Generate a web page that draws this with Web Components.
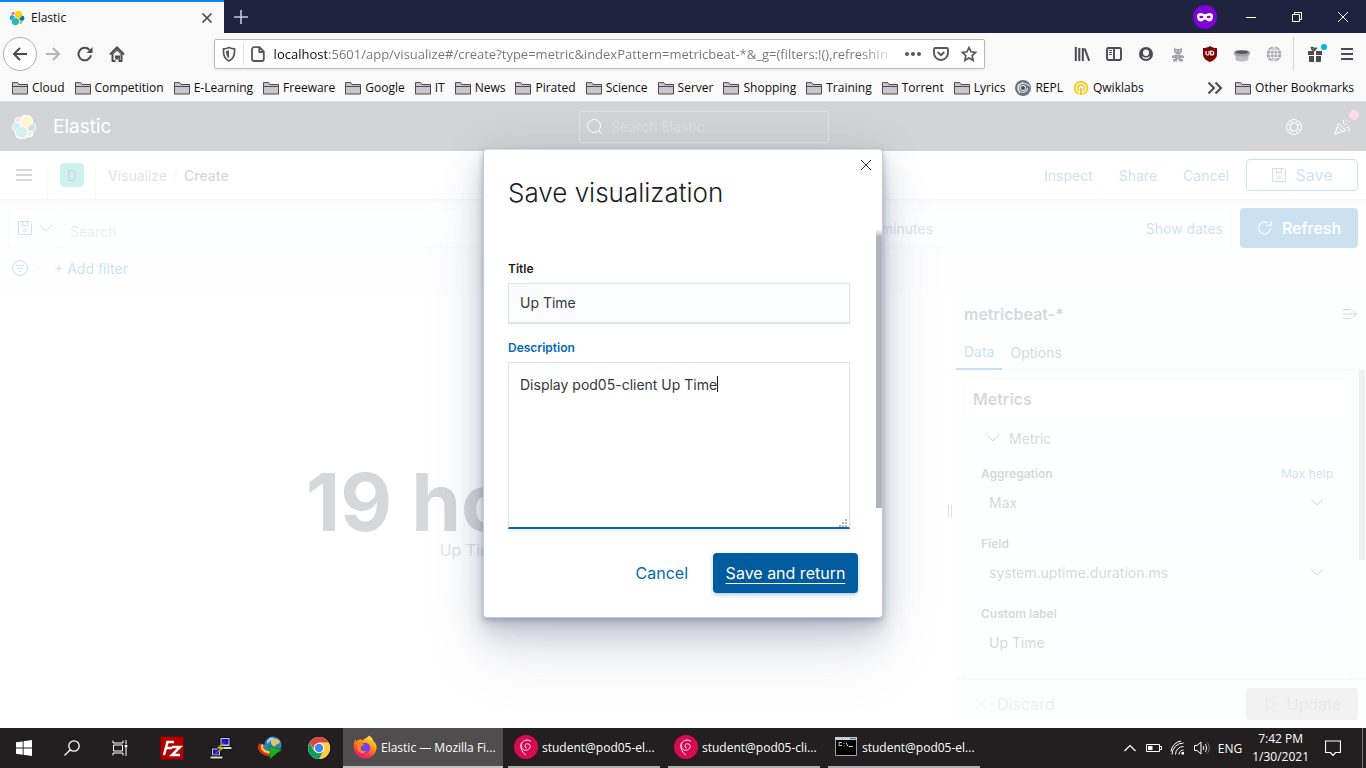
<!DOCTYPE html>
<html lang="en">
<head>
<meta charset="utf-8">
<title>Elastic</title>
<style>
html,body{margin:0;height:100%}
body{display:flex;flex-direction:column;overflow:hidden;font-family:Inter,"Liberation Sans",sans-serif;font-size:14px;color:#343741}
</style>
</head>
<body>
<browser-tabs></browser-tabs>
<browser-toolbar></browser-toolbar>
<bookmarks-bar></bookmarks-bar>
<kibana-app></kibana-app>
<task-bar></task-bar>

<script>
const RESET = `*,:host{box-sizing:border-box}
button,input,select,textarea{font:inherit;color:inherit;margin:0;padding:0;border:0;background:none;border-radius:0;outline:0;appearance:none}
a{color:inherit;text-decoration:none}h1,h2,h3,p{margin:0;font:inherit}`;
function define(name, css, html, setup){
  const t = document.createElement('template');
  t.innerHTML = `<style>${RESET}${css}</style>${html}`;
  customElements.define(name, class extends HTMLElement{
    constructor(){super();this.attachShadow({mode:'open'})}
    connectedCallback(){
      this.shadowRoot.replaceChildren(t.content.cloneNode(true));
      if(setup) setup(this,this.shadowRoot);
    }
  });
}

const S = (d,w=1)=>`<path d="${d}" fill="none" stroke="currentColor" stroke-width="${w}"/>`;
const F = d=>`<path d="${d}" fill="currentColor"/>`;
const ICONS = {
  elastic:[32,`<path fill="#fff" d="M32 16.77a6.33 6.33 0 00-4.14-5.95 9.1 9.1 0 00-16.5-6.9 4.86 4.86 0 00-7.26 6.06A6.3 6.3 0 000 15.9a6.3 6.3 0 004.16 5.97 9.07 9.07 0 0016.4 6.88 4.84 4.84 0 007.26-6.05A6.35 6.35 0 0032 16.77"/><path fill="#fed10a" d="M12.58 13.79l7 3.21 7.07-6.21a7.85 7.85 0 00.15-1.56c0-4.29-3.46-7.75-7.72-7.75a7.77 7.77 0 00-6.4 3.4l-1.16 6.08z"/><path fill="#24bbb1" d="M5.33 21.21a7.9 7.9 0 00-.15 1.59c0 4.3 3.47 7.78 7.75 7.78a7.78 7.78 0 006.4-3.4l1.16-6.06-1.55-2.98-7.02-3.22z"/><path fill="#ef5098" d="M5.29 9.07l4.8 1.13L11.14 4.7a3.82 3.82 0 00-5.85 4.37z"/><path fill="#17a8e0" d="M4.87 10.21a5.7 5.7 0 00-3.74 5.35 5.68 5.68 0 003.65 5.3l6.73-6.12-1.24-2.66z"/><path fill="#93c83e" d="M20.87 27.18a3.82 3.82 0 005.84-4.36l-4.79-1.12z"/><path fill="#0779a1" d="M21.84 20.57l5.28 1.24a5.7 5.7 0 003.74-5.35 5.68 5.68 0 00-3.65-5.29l-6.91 6.07z"/>`],
  tabclose:[16,S('M3.5 3.5l9 9M12.5 3.5l-9 9',1.7)],
  newtab:[16,S('M8 1v14M1 8h14',1.6)],
  mask:[24,`<circle cx="12" cy="12" r="12" fill="#8000d7"/><path fill="#fff" d="M4 11.5c0-2.6 1.6-3.4 3.4-3.4 2 0 3 1.1 4.6 1.1s2.6-1.1 4.6-1.1c1.8 0 3.4.8 3.4 3.4 0 3.2-1.6 4.9-3.7 4.9-2.3 0-3-2-4.300-2s-2 2-4.300 2C5.600 16.400 4 14.700 4 11.500z"/><ellipse cx="8.300" cy="12" rx="2" ry="1.200" fill="#8000d7"/><ellipse cx="15.700" cy="12" rx="2" ry="1.200" fill="#8000d7"/>`],
  minimize:[10,S('M0 5.500h10')],
  restore:[10,S('M.5 2.500h7v7h-7zM2.500 2.500v-2h7v7h-2')],
  winclose:[10,S('M0 0l10 10M10 0L0 10')],
  back:[16,S('M15 8H2M8 2L2 8l6 6',2)],
  forward:[16,S('M1 8h13M8 2l6 6-6 6',2)],
  reload:[16,S('M14 9.300A6.300 6.300 0 1 1 12.500 3.800',2)+F('M15.500 1v6h-6z')],
  home:[16,S('M1 8.500l7-7 7 7',2)+F('M2.500 8.500L8 3l5.500 5.500V15a1 1 0 01-1 1H9.500v-4h-3v4H3.500a1 1 0 01-1-1z')+'<path fill="#f9f9fa" d="M4.500 8L8 4.700 11.500 8v6H11V9.500H6V14H4.500z"/>'+F('M7 10.500h2v3H7z')],
  shield:[16,S('M8 1.500c2 1 4 1.300 5.500 1.300v3C13.500 10 12 13 8 15 4 13 2.500 10 2.500 5.800v-3C4 2.800 6 2.500 8 1.500z',1.700)+F('M8 4c-1 .6-2 .8-3 .9C5 9 6 11 8 12.300z')],
  page:[16,S('M4 1.200h5.500l4.300 4.300V13a2 2 0 01-2 2H4a2 2 0 01-2-2V3.200a2 2 0 012-2zM9.300 1.500V6h4.500',1.800)],
  dots:[16,'<g fill="currentColor"><circle cx="2" cy="8" r="2"/><circle cx="8" cy="8" r="2"/><circle cx="14" cy="8" r="2"/></g>'],
  pocket:[16,S('M2.500 2h11a1.500 1.500 0 011.500 1.500V7A7 7 0 011 7V3.500A1.500 1.500 0 012.500 2zM4.700 6L8 9.200 11.300 6',1.900)],
  star:[16,S('M8 1.500l2 4.300 4.700.6-3.500 3.200.9 4.700L8 12l-4.100 2.300.9-4.700L1.300 6.400 6 5.800z',1.700)],
  library:[16,S('M1.800 1v14M5.300 2v13M8.800 2v13M10.600 2.500l4.600 12.300',2)],
  sidebar:[16,S('M2.500 2h11A1.500 1.500 0 0115 3.500v9a1.500 1.500 0 01-1.500 1.500h-11A1.500 1.500 0 011 12.500v-9A1.500 1.500 0 012.500 2zM8 2v12',1.900)+S('M3 4.500h3M3 6.500h3M3 8.500h3')],
  account:[16,'<path fill-rule="evenodd" fill="currentColor" d="M8 1a7 7 0 110 14A7 7 0 018 1zM8 3.500A3 3 0 005 6.500 3 3 0 008 10a3 3 0 003-3.500 3 3 0 00-3-3zM3.800 9.800A4.800 4.800 0 008 13.200a4.800 4.800 0 004.200-3.400C11 11 10 11.600 8 11.600S5 11 3.800 9.800z"/>'],
  ghost:[16,'<g fill="#a3a3a5"><path d="M4 1.500L6 3h4l2-1.500V6l-2 2H6L4 6z"/><path d="M2 10l4-1.500L8 10l2-1.500 4 1.500v2H2zM3 13h4v2.500H3zM9 13h4v2.500H9zM5 8.500h6V14H5z"/></g><path fill="#f9f9fa" d="M5.500 4.500h1.500v1H5.500zM9 4.500h1.500v1H9zM7.500 11h1v1h-1zM7.500 13h1v1h-1z"/>'],
  ublock:[16,'<path fill="#800000" d="M8 0c2 1.400 4.500 2 7 2v6c0 4.500-3.500 6.500-7 8-3.500-1.500-7-3.500-7-8V2c2.500 0 5-.6 7-2z"/><path d="M4 5v2.500a1.500 1.500 0 003 0V5M8.700 5v4h1a2 2 0 000-4z" fill="none" stroke="#fff" stroke-width="1.200"/>'],
  jar:[16,'<path fill="#bdbdbf" d="M1.500 8h13v5c0 1.500-3 2.500-6.500 2.500s-6.500-1-6.500-2.500z"/><path fill="#a3a3a5" d="M0 6.500C0 4.600 3.600 4 8 4s8 .6 8 2.500V8c0 1.500-3.600 2.300-8 2.300S0 9.500 0 8z"/><ellipse cx="8" cy="6.300" rx="6.500" ry="1.700" fill="#58585a"/>'],
  globe:[16,'<circle cx="8" cy="8" r="7.500" fill="#a9a9ab"/><path d="M8 0v16M0 8h16M1.500 4.300h13M1.500 11.700h13M8 .5C3 4 3 12 8 15.500M8 .5c5 3.500 5 11.500 0 15" fill="none" stroke="#f9f9fa" stroke-width=".9"/>'],
  gift:[16,F('M1 5h6v4H1zM9 5h6v4H9zM2 10h5v6H3a1 1 0 01-1-1zM9 10h5v5a1 1 0 01-1 1H9z')+S('M8 4.500C5 4.500 4.500 3 4.500 1.500 6.500 1.500 8 2.500 8 4.500c0-2 1-2.500 2-2.500',1.600)],
  burger:[16,S('M2 3h12M2 8h12M2 13h12',2)],
  folder:[16,'<path d="M.5 14V2.600h5.200l1.200 1.900h8.600V14z" fill="#c9c7cb" stroke="#4a4a4f"/><path d="M1 6.500h14" stroke="#4a4a4f" fill="none"/>'],
  repl:[16,'<circle cx="8" cy="8" r="8" fill="#66777f"/><g fill="none" stroke="#dfe6e9" stroke-width="1.100"><path d="M12.500 8A4.500 4.500 0 118 3.500c3 0 5.500 1 7 3"/><path d="M3.500 8c0-3 2-5 5-5.500M4 4C2 6.500 2.500 11 5 13"/></g><circle cx="8" cy="8" r="3" fill="#eef1f2"/><circle cx="8" cy="8" r="2.100" fill="#3f4d54"/>'],
  qwik:[16,'<g fill="none" stroke="#f7ca18"><path d="M6 14A6.300 6.300 0 1110 14" stroke-width="1.800"/><path d="M6 10.800a3.400 3.400 0 114 0" stroke-width="1.500"/><path d="M8 8v7" stroke-width="2.200"/></g>'],
  more:[16,S('M1.500 2.500L7 8l-5.500 5.500M8.500 2.500L14 8l-5.500 5.500',2)],
  lens:[16,S('M7 .5a6.500 6.500 0 110 13 6.500 6.500 0 010-13zM11.500 11.500L15.700 15.700')],
  help:[16,S('M8 .5a7.500 7.500 0 110 15 7.500 7.500 0 010-15zM8 4a4 4 0 110 8 4 4 0 010-8zM4.500 1.500L6.300 4.500M11.500 1.500L9.700 4.500M4.500 14.500l1.800-3M11.500 14.500l-1.800-3M1.500 4.500l3 1.800M1.500 11.500l3-1.800M14.500 4.500l-3 1.800M14.500 11.500l-3-1.800')],
  cheer:[16,S('M4.500 4.500L.7 15.300l10.800-3.800zM3.500 7.500l5 5M2.300 11l2.700 2.700M9 5c1-1 1-2.500.3-4M10.500 6.500L13 4M12 9c1.500-1 3-.7 3.500.8s-1 2-1 3M12 1.200h1M14.500 2.500h1M14 6.500h1')],
  menu:[16,S('M0 3h16M0 8h16M0 13h16',2)],
  save:[16,S('M1.500 1.500h11l2 2v11h-13zM5.500 1.500v4h5v-4M8 9a1.500 1.500 0 110 3 1.500 1.500 0 010-3z')],
  down:[16,S('M2 5l6 6 6-6')],
  filter:[16,S('M8 .5a7.500 7.500 0 110 15 7.500 7.500 0 010-15zM3.500 5.500h9M5 8.500h6M7 11.500h2')],
  refresh:[16,S('M13.500 8.500A6 6 0 1110.500 2.700M14 1v4.500H9.500',1.100)],
  collapse:[16,S('M1 3.500h8M1 8h13.500M1 12.500h8M11 4.500L14.500 8 11 11.500')],
  cross:[16,S('M3 3l10 10M13 3L3 13')],
  play:[16,S('M3.500 2.200v11.600L12.500 8z')],
  start:[16,F('M0 2.300L6.700 1.400v6.200H0zM7.600 1.300L16 0v7.600H7.600zM0 8.500h6.700v6.200L0 13.800zM7.600 8.500H16V16L7.600 14.800z')],
  search:[16,S('M10 .8a5.200 5.200 0 110 10.400A5.200 5.200 0 0110 .8zM6.300 9.700L.5 15.500',1.300)],
  taskview:[16,S('M1 .5v2.500h10V.5M1 15.500V13h10v2.500M1.500 5h9v6h-9zM14 0v4.500M14 8v8')+F('M12.700 5h2.600v2.500h-2.600z')],
  filezilla:[24,'<path fill="#b30000" stroke="#7a0000" stroke-dasharray="1 1" d="M.5.5h23v23H.5z"/><path d="M4 19L7.500 6H14M6 12h6M12 11h8l-8 8h8" fill="none" stroke="#fff" stroke-width="2.500"/>'],
  putty:[24,'<g stroke="#111"><path fill="#c9c9c9" d="M11 1.500h10v9H11zM2.500 12h9v8h-9z"/><path fill="#ddd" d="M9 10.500h14v3H9zM1 20h13v3H1z"/></g><path fill="#1818d8" d="M12.500 3h7v5.500h-7zM4 13.500h6v5H4z"/><path fill="#ffee20" stroke="#6d6500" stroke-width=".5" d="M16 6l-8 6 4 .5L6 18l9-6-4-.5z"/>'],
  idm:[24,'<circle cx="15" cy="9" r="8.500" fill="#2f7ec0"/><path fill="#d8c86a" d="M15 3c4-1 7 1 7 3s-4 2-5 4-3-1-4-3 0-3 2-4z"/><path fill="#a6d8f5" d="M9 5c2-4 6-4 7-3s-4 2-7 6z"/><path d="M3 8c-4 5 1 11 10 11" stroke="#d93025" stroke-width="3" fill="none"/><path d="M5 8.500c-3 4 2 8 8 8" stroke="#f7d21b" stroke-width="2.500" fill="none"/><path d="M7 9c-2 3 2 5 6 5" stroke="#3b78d8" stroke-width="2" fill="none"/><path fill="#16b31c" stroke="#0b6b10" stroke-width=".6" d="M11 10l13 4-5 3-7 6 0-6z"/>'],
  chrome:[24,'<circle cx="12" cy="12" r="11" fill="#fff"/><path fill="#ffcd40" d="M21.500 6.500A11 11 0 0112 23l-1-1 5.500-8L12 6.500z"/><path fill="#0f9d58" d="M2.500 6.500A11 11 0 0012 23l4.500-8.500L7 14.500z"/><path fill="#db4437" d="M12 6.500h9.500a11 11 0 00-19 0L7.500 14z"/><circle cx="12" cy="12" r="5.300" fill="#fff"/><circle cx="12" cy="12" r="4.200" fill="#4285f4"/>'],
  firefox:[24,'<defs><linearGradient id="g" x1=".8" y1="0" x2=".3" y2="1"><stop offset="0" stop-color="#fff44f"/><stop offset=".4" stop-color="#ff980e"/><stop offset=".75" stop-color="#ff3647"/><stop offset="1" stop-color="#e31587"/></linearGradient></defs><path fill="url(#g)" d="M16 .5c3 2 4 4 4.500 6C23 8 24 11 23.500 14A11.500 11.500 0 01.7 13C.4 9 1 6 3 4v3c1-1.500 2-2.500 4-2.500 1.500 0 2 .5 3 1C11 3 14 3.500 16 .5z"/><circle cx="12" cy="13" r="5.300" fill="#7542e5"/><path fill="#ff8a16" d="M4.500 8.500C7 7.500 9 8 11 9.500c-1 1.500-3.500 1.500-3.500 3.500 0 2.500 3 4 6 3-3 4-9 2-9.500-3z"/>'],
  debian:[24,'<circle cx="12" cy="12" r="12" fill="#d70a53"/><path d="M12.500 13c-1.500-.3-2-2-1-3.300s3.700-1.400 4.500.6c.9 2.500-1.500 5.200-4.500 5-3.500-.3-5.300-4-3.700-7.200C9.500 5 14 4 17 6.500M7.500 8c-1.700 4 0 9 4.500 12" fill="none" stroke="#fff" stroke-width="1"/>'],
  cmd:[24,'<path fill="#000" stroke="#98a2a8" d="M1.500 2.500h21v18h-21z"/><path fill="#c5d0d8" d="M1 2h22v3H1z"/><path fill="#3c6ea5" d="M16 3h6v1h-6z"/><path d="M8 7.500H5v3h3M10 8v1M10 10.500v1M12 7.500l2 4M15 11.500h4" fill="none" stroke="#ccc"/>'],
  up:[16,S('M2.500 11L8 5.500 13.500 11',1.200)],
  battery:[16,S('M.5 4.500h13v7H.5zM14 6.500h1.500v3H14')+F('M2 6h4.500v4H2z')],
  wifi:[16,S('M2 14.500A11.500 11.500 0 0113.500 3M5.500 14.500a8 8 0 018-8M9 14.500a4.500 4.500 0 014.500-4.500M1 11.500A12 12 0 0111 1')+F('M11.500 12h2.500v2.500h-2.500z')],
  sound:[16,S('M.5 5.500h2.500L7 2v12L3 10.500H.5zM9 6c1 1 1 3 0 4M11 4c2 2 2 6 0 8')+'<path d="M13 2.500c3 3 3 8 0 11" fill="none" stroke="#777"/>'],
  note:[16,S('M.5 1h15v11.500h-5L8 15.500 5.500 12.500h-5z',1.200)]
};
customElements.define('ui-icon', class extends HTMLElement{
  static observedAttributes = ['name','size'];
  constructor(){super();this.attachShadow({mode:'open'})}
  connectedCallback(){this.draw()}
  attributeChangedCallback(){this.draw()}
  draw(){
    const icon = ICONS[this.getAttribute('name')];
    if(!icon) return;
    const s = this.getAttribute('size')||16;
    this.shadowRoot.innerHTML = `<style>:host{display:inline-flex;flex:none}svg{display:block}</style><svg width="${s}" height="${s}" viewBox="0 0 ${icon[0]} ${icon[0]}" aria-hidden="true">${icon[1]}</svg>`;
  }
});

const OS = `font-family:"Open Sans","Noto Sans",sans-serif;`;

define('browser-tabs', `
:host{display:flex;flex:none;height:33px;background:#202340;${OS}font-size:12px;color:#fff}
.tab{width:224px;background:#f9f9fa;border-top:2px solid #0a84ff;color:#0c0c0d;display:flex;align-items:center;gap:6px;padding:0 9px}
.tab span{flex:1}
button{display:flex;align-items:center;justify-content:center}
.tab button{color:#4a4a4f}
.new{width:33px;color:#c9c9d4}
.win{margin-left:auto;display:flex}
.win>*{width:46px;display:flex;align-items:center;justify-content:center}`,
`<div class="tab"><ui-icon name="elastic"></ui-icon><span>Elastic</span><button aria-label="Close tab"><ui-icon name="tabclose"></ui-icon></button></div>
<button class="new" aria-label="New tab"><ui-icon name="newtab"></ui-icon></button>
<div class="win"><div><ui-icon name="mask" size="24"></ui-icon></div><button aria-label="Minimize"><ui-icon name="minimize" size="10"></ui-icon></button><button aria-label="Restore"><ui-icon name="restore" size="10"></ui-icon></button><button aria-label="Close"><ui-icon name="winclose" size="10"></ui-icon></button></div>`);

define('tool-button', `
:host{display:flex;flex:none;width:32px;height:32px}
button{width:100%;display:flex;align-items:center;justify-content:center}`,
`<button><ui-icon></ui-icon></button>`, (el,root)=>{
  root.querySelector('button').setAttribute('aria-label',el.getAttribute('label'));
  root.querySelector('ui-icon').setAttribute('name',el.getAttribute('icon'));
});

define('browser-toolbar', `
:host{display:flex;flex:none;align-items:center;height:41px;padding:0 3px;background:#f9f9fa;color:#4a4a4f;${OS}}
.back{width:34px;height:34px;border:1px solid #b1b1b3;border-radius:50%;background:#fff;align-items:center}
.off{color:#b5b5b7}
.gap{flex:82}
.url{flex:770;min-width:0;height:30px;display:flex;align-items:center;background:#fff;border:1px solid #b9b9bb;border-radius:2px;box-shadow:0 1px 3px #0001;padding:0 7px 0 6px;gap:8px;color:#57575b}
.url i{width:1px;height:22px;background:#dcdcde;margin:0 -2px}
input{flex:1;min-width:0;height:28px;font-size:13px;background:linear-gradient(90deg,#0c0c0d 53px,#737378 53px calc(100% - 36px),#73737800 calc(100% - 2px));-webkit-background-clip:text;background-clip:text;-webkit-text-fill-color:transparent}
.acts{display:flex;gap:12px;align-items:center}
.sep{width:1px;height:33px;background:#d7d7db;margin:0 5px 0 3px}
.gift{position:relative}
.gift b{position:absolute;right:4px;top:6px;width:6px;height:6px;border-radius:50%;background:#00b3f4}`,
`<tool-button class="back" icon="back" label="Back"></tool-button>
<tool-button class="off" icon="forward" label="Forward"></tool-button>
<tool-button icon="reload" label="Reload"></tool-button>
<tool-button icon="home" label="Home"></tool-button>
<div class="gap"></div>
<div class="url"><ui-icon name="shield"></ui-icon><i></i><ui-icon name="page"></ui-icon><input aria-label="Address" value="localhost:5601/app/visualize#/create?type=metric&amp;indexPattern=metricbeat-*&amp;_g=(filters:!(),refreshIn"><div class="acts"><ui-icon name="dots"></ui-icon><ui-icon name="pocket"></ui-icon><ui-icon name="star"></ui-icon></div></div>
<div class="gap"></div>
<tool-button icon="library" label="Library"></tool-button>
<tool-button icon="sidebar" label="Sidebars"></tool-button>
<tool-button icon="account" label="Account"></tool-button>
<tool-button icon="ghost" label="Add-on"></tool-button>
<tool-button icon="ublock" label="uBlock"></tool-button>
<tool-button icon="jar" label="Cookies"></tool-button>
<tool-button icon="globe" label="Proxy"></tool-button>
<div class="sep"></div>
<div class="gift"><tool-button icon="gift" label="What's new"></tool-button><b></b></div>
<tool-button icon="burger" label="Menu"></tool-button>`);

define('bookmark-item', `
:host{display:block;flex:none}
a{display:flex;align-items:center;gap:4px;white-space:nowrap;line-height:16px}`,
`<a href="#"><ui-icon></ui-icon><slot></slot></a>`, (el,root)=>{
  root.querySelector('ui-icon').setAttribute('name',el.getAttribute('icon')||'folder');
});
define('bookmarks-bar', `
:host{display:flex;flex:none;align-items:center;gap:12px;height:28px;padding:0 12px;background:#f9f9fa;border-bottom:1px solid #dcdcde;color:#0c0c0d;${OS}font-size:12px}
nav{display:flex;gap:10px;flex:1;min-width:0}
button{display:flex;color:#4a4a4f}`,
`<nav>${'Cloud,Competition,E-Learning,Freeware,Google,IT,News,Pirated,Science,Server,Shopping,Training,Torrent,Lyrics'.split(',').map(n=>`<bookmark-item>${n}</bookmark-item>`).join('')}<bookmark-item icon="repl">REPL</bookmark-item><bookmark-item icon="qwik">Qwiklabs</bookmark-item></nav>
<button aria-label="More bookmarks"><ui-icon name="more"></ui-icon></button><bookmark-item>Other Bookmarks</bookmark-item>`);

define('elastic-header', `
:host{display:flex;flex:none;align-items:center;justify-content:space-between;height:49px;background:#25282f;color:#fff}
.brand{display:flex;align-items:center;gap:17px;width:138px;padding-left:12px;font-size:19px}
.search{display:flex;align-items:center;gap:8px;width:250px;height:32px;padding:0 8px 0 7px;border:1px solid #6a6d75;border-radius:2px}
input{flex:1;min-width:0;font-size:14px}
input::placeholder{color:#5d6069;opacity:1}
.acts{display:flex}
button{width:48px;height:48px;display:flex;align-items:center;justify-content:center;position:relative}
b{position:absolute;right:7px;top:7px;width:10px;height:10px;border-radius:50%;background:#f04e98}`,
`<a class="brand" href="#"><ui-icon name="elastic" size="24"></ui-icon><span>Elastic</span></a>
<label class="search"><ui-icon name="lens"></ui-icon><input aria-label="Search Elastic" placeholder="Search Elastic"></label>
<div class="acts"><button aria-label="Help"><ui-icon name="help"></ui-icon></button><button aria-label="News"><ui-icon name="cheer"></ui-icon><b></b></button></div>`);

define('elastic-nav', `
:host{display:flex;flex:none;align-items:center;height:49px;border-bottom:1px solid #d3dae6;background:#fff;box-shadow:0 2px 2px #98a2b333;position:relative;padding-right:8px}
.m{width:47px;height:48px;display:flex;align-items:center;justify-content:center;color:#343741}
.av{align-self:stretch;display:flex;align-items:flex-end}
.av i{width:1px;height:32px;background:#d3dae6}
.av button{width:24px;height:24px;border-radius:4px;background:#00bfb3;margin:0 11px 12px 12px;font-size:14px;color:#222}
nav{display:flex;align-items:center;gap:8px;padding-left:12px}
nav a{color:#69707d}nav s{width:1px;height:16px;background:#c3cad6;transform:rotate(15deg)}
nav b{font-weight:500;color:#343741}
.acts{margin-left:auto;display:flex;align-items:center;gap:26px;color:#006bb4}
.save{width:112px;height:32px;border:1px solid #006bb4;border-radius:4px;font-size:16px;display:flex;gap:8px;align-items:center;justify-content:center;margin-left:-9px}`,
`<button class="m" aria-label="Menu"><ui-icon name="menu"></ui-icon></button>
<div class="av"><i></i><button>D</button><i></i></div>
<nav><a href="#">Visualize</a><s></s><b>Create</b></nav>
<div class="acts"><button>Inspect</button><button>Share</button><button>Cancel</button><button class="save"><ui-icon name="save"></ui-icon>Save</button></div>`);

define('query-bar', `
:host{display:block;flex:none;height:93px;padding:8px 8px 0;background:#f9fafc}
.row{display:flex;gap:8px}
.box{flex:1;display:flex;align-items:center;height:40px;border:1px solid #e2e7ef;background:#fbfcfd;box-shadow:0 1px 1px #98a2b322}
.sq{width:54px;align-self:stretch;display:flex;align-items:center;justify-content:center;gap:5px;color:#006bb4;border-right:1px solid #e2e7ef}
.box input{flex:1;min-width:0;padding:6px 7px 0;font-size:14px}
input::placeholder{color:#98a2b3;opacity:1}
.time{width:400px;display:flex;justify-content:space-between;padding-right:8px;color:#69707d}
.time button:last-child{color:#006bb4}
.go{width:118px;height:40px;border-radius:4px;background:#006bb4;color:#fff;font-size:16px;font-weight:500;display:flex;align-items:center;justify-content:center;gap:9px}
.filters{display:flex;align-items:center;gap:6px;height:40px;padding-left:4px;color:#006bb4}
.filters i{width:10px;height:1px;background:#d3dae6;margin-right:4px}`,
`<div class="row"><div class="box"><button class="sq" aria-label="Saved queries"><ui-icon name="save"></ui-icon><ui-icon name="down"></ui-icon></button><input aria-label="Query" placeholder="Search"><div class="time"><button>Last 15 minutes</button><button>Show dates</button></div></div>
<button class="go"><ui-icon name="refresh"></ui-icon>Refresh</button></div>
<div class="filters"><ui-icon name="filter"></ui-icon><i></i><button>+ Add filter</button></div>`);

define('metric-view', `
:host{display:flex;flex:1;flex-direction:column;align-items:center;justify-content:center;background:#fff;min-width:0;padding-top:2px}
strong{font-size:80px;line-height:76px;font-weight:700;color:#343741}
span{font-size:16px;line-height:20px;color:#69707d}`,
`<strong>19 hours</strong><span>Up Time</span>`);

define('form-row', `
:host{display:block}
.l{display:flex;justify-content:space-between;font-size:12px;line-height:18px;margin-bottom:3px}
label{font-weight:600}
a{color:#006bb4}
.f{position:relative;display:flex;align-items:center}
select,input{width:100%;height:32px;padding:0 7px;border:1px solid #e2e7ef;background:#fbfcfd;font-size:14px}
.f ui-icon{position:absolute;right:8px;pointer-events:none}`,
``, (el,root)=>{
  const v=el.getAttribute('value'), l=el.getAttribute('label'), h=el.getAttribute('help');
  const field = el.hasAttribute('select') ? `<select id="f"><option>${v}</option></select><ui-icon name="down"></ui-icon>` : `<input id="f" value="${v}">`;
  root.innerHTML += `<div class="l"><label for="f">${l}</label>${h?`<a href="#">${h}</a>`:''}</div><div class="f">${field}</div>`;
});

define('vis-sidebar', `
:host{display:flex;flex-direction:column;flex:none;width:410px;background:#f5f7fa;min-height:0}
header{display:flex;align-items:center;justify-content:space-between;height:42px;padding:0 8px;font-size:16px;font-weight:600}
.tabs{display:flex;height:35px;border-bottom:1px solid #d3dae6}
.tabs button{padding:0 8px;font-size:14px;height:35px}
.tabs .on{color:#006bb4;border-bottom:2px solid #006bb4}
.scroll{flex:1;min-height:0;display:flex;overflow:hidden;justify-content:space-between}
.scroll>i{width:6px;height:190px;background:#a9aeb7;margin-right:1px}
.card{width:386px;margin:8px 0 0 8px;border:1px solid #d3dae6;border-bottom:0;border-radius:4px 4px 0 0;background:#fff;padding:8px;flex:none}
h2{font-size:16px;line-height:24px;font-weight:600}
.agg{margin-top:8px;padding:0 8px 24px;background:#fbfcfd;border-top:1px solid #e6eaf1;display:flex;flex-direction:column;gap:17px}
.agg h3{display:flex;align-items:center;gap:8px;height:36px;padding-left:4px;margin-bottom:-8px}
footer{display:flex;align-items:center;justify-content:space-between;height:49px;border-top:1px solid #d3dae6;padding:0 8px 0 17px;font-size:16px;color:#a9aeb7}
footer button{display:flex;align-items:center;justify-content:center;gap:8px;height:32px}
.up{width:112px;background:#bdbdbf;border-radius:4px;color:#85888f}`,
`<header><span>metricbeat-*</span><ui-icon name="collapse"></ui-icon></header>
<div class="tabs"><button class="on">Data</button><button>Options</button></div>
<div class="scroll"><div class="card"><h2>Metrics</h2><div class="agg"><h3><ui-icon name="down"></ui-icon>Metric</h3>
<form-row label="Aggregation" help="Max help" value="Max" select></form-row>
<form-row label="Field" value="system.uptime.duration.ms" select></form-row>
<form-row label="Custom label" value="Up Time"></form-row></div></div><i></i></div>
<footer><button><ui-icon name="cross"></ui-icon>Discard</button><button class="up"><ui-icon name="play"></ui-icon>Update</button></footer>`);

define('save-modal', `
:host{position:absolute;inset:0;background:#fffc;display:flex;align-items:center;justify-content:center;padding-bottom:64px;z-index:5}
.modal{position:relative;width:400px;background:#fff;border:1px solid #c5cad4;border-top-color:#d9dce2;border-radius:4px;box-shadow:0 40px 64px 0 #4150781a,0 27px 32px 0 #4150781a,0 14px 16px 0 #4150781a,0 4px 8px 0 #41507833,0 2px 4px 0 #41507833,0 0 40px #41507826}
.x{position:absolute;right:8px;top:7px;display:flex}
h1{font-size:26px;line-height:40px;font-weight:300;padding:23px 24px 16px;color:#1a1c21}
.body{display:flex;justify-content:space-between}
form{flex:1;display:flex;flex-direction:column;padding:31px 26px 0 24px}
.body>i{width:6px;height:279px;background:linear-gradient(#b1b4bb00,#b1b4bb 8px)}
label{font-size:12px;line-height:18px;font-weight:600;color:#1a1c21;margin-bottom:5px}
label.on{color:#006bb4;margin-top:16px}
input{height:40px;padding:0 11px;font-size:14px;border:1px solid #dfe3ec;background:#fbfcfd;box-shadow:0 1px 1px #98a2b344}
.area{position:relative;display:flex}
textarea{flex:1;height:167px;padding:11px;font-size:14px;line-height:21px;border:1px solid #dfe3ec;border-bottom:2px solid #0069b4;background:#fff;resize:none;caret-color:transparent;box-shadow:0 3px 3px #98a2b322}
.caret{position:absolute;left:209px;top:14px;width:1px;height:16px;background:#1a1c21}
.grip{position:absolute;right:3px;bottom:2px}
footer{display:flex;align-items:center;justify-content:flex-end;gap:25px;padding:24px;font-size:16px;color:#006bb4}
.ok{width:145px;height:40px;border-radius:4px;background:#005c9e;color:#fff;text-decoration:underline;text-underline-offset:4px;box-shadow:0 2px 4px #0055994d}`,
`<div class="modal" role="dialog" aria-labelledby="t"><button class="x" aria-label="Close"><ui-icon name="cross"></ui-icon></button>
<h1 id="t">Save visualization</h1>
<div class="body"><form><label for="title">Title</label><input id="title" value="Up Time"><label class="on" for="desc">Description</label><div class="area"><textarea id="desc">Display pod05-client Up Time</textarea><span class="caret"></span><svg class="grip" width="8" height="8" fill="#b4b4b8"><path d="M6 0h2v2H6zM3 3h2v2H3zM6 3h2v2H6zM0 6h2v2H0zM3 6h2v2H3zM6 6h2v2H6z"/></svg></div></form><i></i></div>
<footer><button>Cancel</button><button class="ok">Save and return</button></footer></div>`);

define('kibana-app', `
:host{display:flex;flex-direction:column;flex:1;min-height:0;position:relative;overflow:hidden;background:#fff}
main{display:flex;flex:1;min-height:0}
.grip{width:13px;display:flex;align-items:center;justify-content:center;gap:2px}
.grip i{width:1px;height:12px;background:#69707d}`,
`<elastic-header></elastic-header><elastic-nav></elastic-nav><query-bar></query-bar>
<main><metric-view></metric-view><div class="grip"><i></i><i></i></div><vis-sidebar></vis-sidebar></main>
<save-modal></save-modal>`);

define('task-item', `
:host{display:block;flex:none;width:152px;height:40px;margin-right:8px;border-bottom:2px solid #b3b0b0}
:host([active]){width:160px;margin-right:5px;background:#504d4f;border-color:#c5c2c3}
button{width:100%;height:100%;display:flex;align-items:center;gap:4px;padding-left:6px;white-space:nowrap}
:host([active]) button{padding-left:10px}`,
`<button><ui-icon size="24"></ui-icon><slot></slot></button>`, (el,root)=>{
  root.querySelector('ui-icon').setAttribute('name',el.getAttribute('icon'));
});
const pin = (n,s)=>`<button aria-label="${n}"><ui-icon name="${n}" size="${s}"></ui-icon></button>`;
define('task-bar', `
:host{display:flex;flex:none;height:40px;background:#231f20;color:#fff;${OS}font-size:12px}
.pins{display:flex}
.pins button{width:48px;display:flex;align-items:center;justify-content:center}
.apps{padding-left:3px}
.apps button{width:49px}
.tray{margin-left:auto;display:flex;align-items:center;gap:8px;border-right:1px solid #777;margin-right:3px}
time{text-align:center;line-height:18px;margin:0 8px 0 2px}
.note{margin-right:21px}`,
`<div class="pins">${pin('start',16)+pin('search',16)+pin('taskview',16)}</div>
<div class="pins apps">${pin('filezilla',24)+pin('putty',24)+pin('idm',24)+pin('chrome',24)}</div>
<task-item icon="firefox" active>Elastic — Mozilla Fi...</task-item>
<task-item icon="debian">student@pod05-el...</task-item>
<task-item icon="debian">student@pod05-cli...</task-item>
<task-item icon="cmd">student@pod05-el...</task-item>
<div class="tray"><ui-icon name="up"></ui-icon><ui-icon name="battery"></ui-icon><ui-icon name="wifi"></ui-icon><ui-icon name="sound"></ui-icon><span>ENG</span><time>7:42 PM<br>1/30/2021</time><ui-icon class="note" name="note"></ui-icon></div>`);
</script>
</body>
</html>
